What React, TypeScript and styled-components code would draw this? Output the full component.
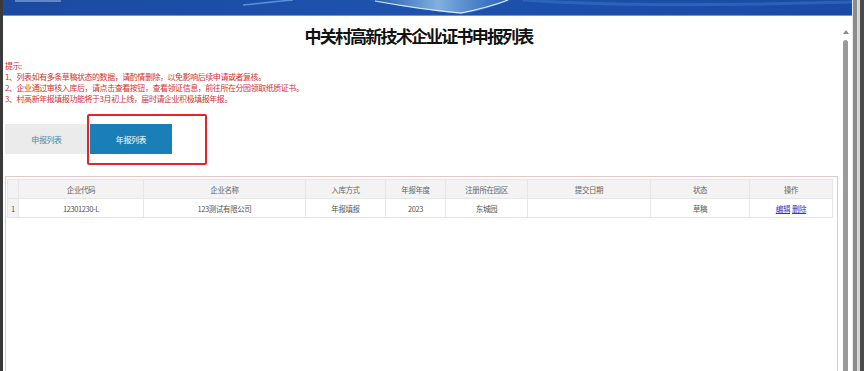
import React from 'react';
import styled, { createGlobalStyle } from 'styled-components';

const GlobalStyle = createGlobalStyle`
  html, body {
    margin: 0;
    height: 100%;
    overflow: hidden;
    background: #fff;
  }
  #root {
    height: 100%;
  }
`;

const FONT = `"Noto Sans CJK SC", "Noto Sans", "Liberation Sans", sans-serif`;

const Frame = styled.div`
  display: flex;
  height: 100vh;
  font-family: ${FONT};
`;

const LeftEdge = styled.div`
  width: 3px;
  background: #3a3a3a;
`;

const RightChrome = styled.div`
  width: 12px;
  background: linear-gradient(
    to right,
    #e8e8e8 0 1px,
    #8c8c8c 1px 5px,
    #d6d6d6 5px 8px,
    #4a4a4a 8px 12px
  );
`;

const Window = styled.div`
  flex: 1;
  display: flex;
  flex-direction: column;
  min-width: 0;
`;

const Banner = styled.div`
  position: relative;
  height: 15px;
  background: linear-gradient(to right, #1b4aa0, #1e52ad 45%, #1a4aa4);
  border-bottom: 1px solid #6a98da;
  overflow: hidden;
  svg {
    display: block;
  }
`;

const Body = styled.div`
  flex: 1;
  display: flex;
  min-height: 0;
`;

const Content = styled.div`
  flex: 1;
  display: flex;
  flex-direction: column;
  min-width: 0;
  overflow: hidden;
`;

const PageScroll = styled.div`
  width: 12px;
  display: flex;
  flex-direction: column;
  align-items: center;
  padding-top: 14px;
`;

const ScrollArrow = styled.div`
  width: 0;
  height: 0;
  border-left: 3px solid transparent;
  border-right: 3px solid transparent;
  border-bottom: 4px solid #8a8a8a;
  margin-right: 1px;
`;

const ScrollThumb = styled.div`
  flex: 1;
  width: 5px;
  margin-top: 6px;
  margin-right: 1px;
  background: #9a9a9a;
  border-radius: 3px 3px 0 0;
`;

const Title = styled.h1`
  margin: 0;
  height: 40px;
  line-height: 40px;
  padding-right: 6px;
  text-align: center;
  font-size: 17px;
  font-weight: 700;
  letter-spacing: -1.8px;
  color: #111;
`;

const Tips = styled.div`
  padding: 4px 0 0 2px;
  color: #d3302c;
  font-size: 8px;
  line-height: 11px;
  letter-spacing: -0.45px;
  white-space: nowrap;
`;

const TabBar = styled.div`
  position: relative;
  display: flex;
  gap: 2px;
  margin-top: 20px;
  padding-left: 2px;
`;

const Tab = styled.div<{ $active?: boolean; $w: number }>`
  width: ${p => p.$w}px;
  height: 30px;
  display: flex;
  align-items: center;
  justify-content: center;
  font-size: 8px;
  letter-spacing: -0.4px;
  background: ${p => (p.$active ? '#1a7fb7' : '#ebebeb')};
  color: ${p => (p.$active ? '#fff' : '#4a87a8')};
`;

const Annotation = styled.div`
  position: absolute;
  left: 84px;
  top: -10px;
  width: 116px;
  height: 47px;
  border: 2px solid #e3262b;
  border-radius: 2px;
  pointer-events: none;
`;

const TablePanel = styled.div`
  flex: 1;
  margin: 22px 2px 0 2px;
  border: 1px solid #e6c6c8;
  border-bottom: none;
  padding: 2px 5px 0 1px;
`;

const Grid = styled.table`
  width: 825px;
  table-layout: fixed;
  border-collapse: collapse;
  font-size: 7.5px;
  letter-spacing: -0.4px;
  color: #555;
`;

const HeadCell = styled.th`
  height: 18px;
  padding: 0;
  font-weight: 400;
  color: #666;
  background: #f3f3f3;
  border: 1px solid #e6e6e6;
  text-align: center;
`;

const Cell = styled.td<{ $index?: boolean }>`
  height: 18px;
  padding: ${p => (p.$index ? '0 0 0 3px' : '0')};
  background: ${p => (p.$index ? '#f3f3f3' : '#fff')};
  border: 1px solid #e6e6e6;
  text-align: ${p => (p.$index ? 'left' : 'center')};
`;

const ActionLink = styled.a`
  color: #3636c4;
  text-decoration: underline;
  margin: 0 1px;
  cursor: pointer;
`;

const columns = [
  { key: 'idx', title: '', width: 11 },
  { key: 'code', title: '企业代码', width: 125 },
  { key: 'name', title: '企业名称', width: 162 },
  { key: 'way', title: '入库方式', width: 80 },
  { key: 'year', title: '年报年度', width: 60 },
  { key: 'park', title: '注册所在园区', width: 82 },
  { key: 'date', title: '提交日期', width: 123 },
  { key: 'status', title: '状态', width: 99 },
  { key: 'ops', title: '操作', width: 83 },
];

const rows = [
  { code: '12301230-L', name: '123测试有限公司', way: '年报填报', year: '2023', park: '东城园', date: '', status: '草稿' },
];

const tips = [
  '提示:',
  '1、列表如有多条草稿状态的数据，请酌情删除，以免影响后续申请或者复核。',
  '2、企业通过审核入库后，请点击查看按钮，查看领证信息，前往所在分园领取纸质证书。',
  '3、村高新年报填报功能将于3月初上线，届时请企业积极填报年报。',
];

function BannerArt() {
  return (
    <svg width="100%" height="15" viewBox="0 0 849 15" preserveAspectRatio="none">
      <defs>
        <linearGradient id="sw" x1="0" y1="0" x2="1" y2="0">
          <stop offset="0" stopColor="#9fdcff" stopOpacity="0" />
          <stop offset="0.5" stopColor="#c8f0ff" stopOpacity="0.85" />
          <stop offset="1" stopColor="#7cc8ff" stopOpacity="0.2" />
        </linearGradient>
      </defs>
      <rect x="12" y="0" width="46" height="2" fill="#8fb0e0" opacity="0.6" />
      <path d="M240 5 C 260 3, 275 1, 290 0" stroke="#7fbff5" strokeWidth="1.5" fill="none" opacity="0.6" />
      <path d="M362 0 C 395 6, 430 11, 458 14 C 480 10, 498 4, 508 0 Z" fill="url(#sw)" opacity="0.7" />
      <path d="M372 1 C 405 7, 435 11, 458 13 C 478 9, 495 4, 505 0" stroke="#e6f8ff" strokeWidth="1.2" fill="none" opacity="0.9" />
      <path d="M520 0 C 600 6, 700 6, 849 2" stroke="#3c78d0" strokeWidth="3" fill="none" opacity="0.5" />
    </svg>
  );
}

export default function App() {
  return (
    <>
      <GlobalStyle />
      <Frame>
        <LeftEdge />
        <Window>
          <Banner>
            <BannerArt />
          </Banner>
          <Body>
            <Content>
              <Title>中关村高新技术企业证书申报列表</Title>
              <Tips>
                {tips.map(t => (
                  <div key={t}>{t}</div>
                ))}
              </Tips>
              <TabBar>
                <Tab $w={83}>申报列表</Tab>
                <Tab $w={82} $active>年报列表</Tab>
                <Annotation />
              </TabBar>
              <TablePanel>
                <Grid>
                  <colgroup>
                    {columns.map(c => (
                      <col key={c.key} style={{ width: c.width }} />
                    ))}
                  </colgroup>
                  <thead>
                    <tr>
                      {columns.map(c => (
                        <HeadCell key={c.key}>{c.title}</HeadCell>
                      ))}
                    </tr>
                  </thead>
                  <tbody>
                    {rows.map((r, i) => (
                      <tr key={r.code}>
                        <Cell $index>{i + 1}</Cell>
                        <Cell>{r.code}</Cell>
                        <Cell>{r.name}</Cell>
                        <Cell>{r.way}</Cell>
                        <Cell>{r.year}</Cell>
                        <Cell>{r.park}</Cell>
                        <Cell>{r.date}</Cell>
                        <Cell>{r.status}</Cell>
                        <Cell>
                          <ActionLink>编辑</ActionLink>
                          <ActionLink>删除</ActionLink>
                        </Cell>
                      </tr>
                    ))}
                  </tbody>
                </Grid>
              </TablePanel>
            </Content>
            <PageScroll>
              <ScrollArrow />
              <ScrollThumb />
            </PageScroll>
          </Body>
        </Window>
        <RightChrome />
      </Frame>
    </>
  );
}
